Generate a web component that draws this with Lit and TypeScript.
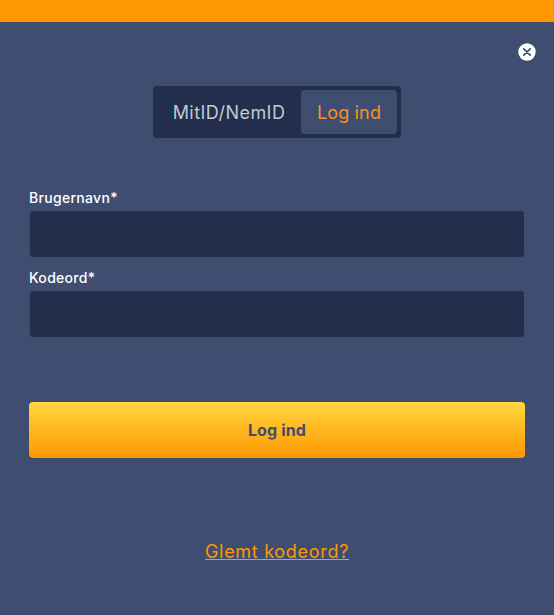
import { LitElement, html, css } from "lit";
import { customElement } from "lit/decorators.js";

@customElement("app-root")
export class AppRoot extends LitElement {
  static styles = css`
    :host {
      display: block;
      width: 554px;
      height: 615px;
      overflow: hidden;
      background: #3f4d70;
      font-family: "Inter", "Liberation Sans", sans-serif;
    }
    .top { height: 22px; background: #ff9800; }
    .closeRow {
      display: flex;
      justify-content: flex-end;
      padding: 21px 18px 0 0;
    }
    .close { display: block; width: 18px; height: 18px; }
    .tabsRow { display: flex; justify-content: center; margin-top: 25px; }
    .tabs {
      display: flex;
      align-items: center;
      width: 248px;
      height: 52px;
      box-sizing: border-box;
      padding: 4px;
      background: #222e4c;
      border-radius: 4px;
      font-size: 18px;
    }
    .tab {
      height: 44px;
      display: flex;
      align-items: center;
      justify-content: center;
      border-radius: 4px;
    }
    .tab.off { width: 144px; color: #c4c8d2; letter-spacing: 0.45px; }
    .tab.on { width: 96px; background: #3f4d70; color: #ff8f1c; letter-spacing: 0.15px; }
    form {
      display: flex;
      flex-direction: column;
      padding: 0 29px;
      margin-top: 49px;
    }
    label {
      display: block;
      height: 23px;
      line-height: 22px;
      font-size: 14px;
      font-weight: 500;
      color: #fff;
      letter-spacing: 0.3px;
    }
    .field { display: block; height: 48px; margin-bottom: 9px; }
    .input {
      display: block;
      width: 100%;
      height: 48px;
      box-sizing: border-box;
      border: 1px solid #3f4d70;
      border-radius: 4px;
      background: #222e4c;
      outline: none;
    }
    button {
      margin-top: 55px;
      height: 56px;
      border: none;
      border-radius: 4px;
      background: linear-gradient(180deg, #ffd740 0%, #ff9800 100%);
      color: #3f4d70;
      font: 700 16px "Inter", "Liberation Sans", sans-serif;
      letter-spacing: 0.15px;
    }
    .linkRow { display: flex; justify-content: center; margin-top: 81px; }
    a {
      color: #ff9800;
      font-size: 18px;
      line-height: 26px;
      letter-spacing: 0.7px;
      text-decoration: underline;
    }
  `;

  render() {
    return html`
      <div class="top"></div>
      <div class="closeRow">
        <svg class="close" viewBox="0 0 18 18" aria-label="Luk">
          <circle cx="9" cy="9" r="8.7" fill="#fff"></circle>
          <path d="M5.8 5.8l6.4 6.4M12.2 5.8l-6.4 6.4" stroke="#3f4d70" stroke-width="1.7" stroke-linecap="round"></path>
        </svg>
      </div>
      <div class="tabsRow">
        <div class="tabs">
          <div class="tab off">MitID/NemID</div>
          <div class="tab on">Log ind</div>
        </div>
      </div>
      <form @submit=${(e: Event) => e.preventDefault()}>
        <label>Brugernavn*</label>
        <div class="field"><input class="input" type="text" /></div>
        <label>Kodeord*</label>
        <div class="field"><input class="input" type="password" /></div>
        <button type="submit">Log ind</button>
      </form>
      <div class="linkRow"><a href="#">Glemt kodeord?</a></div>
    `;
  }
}
